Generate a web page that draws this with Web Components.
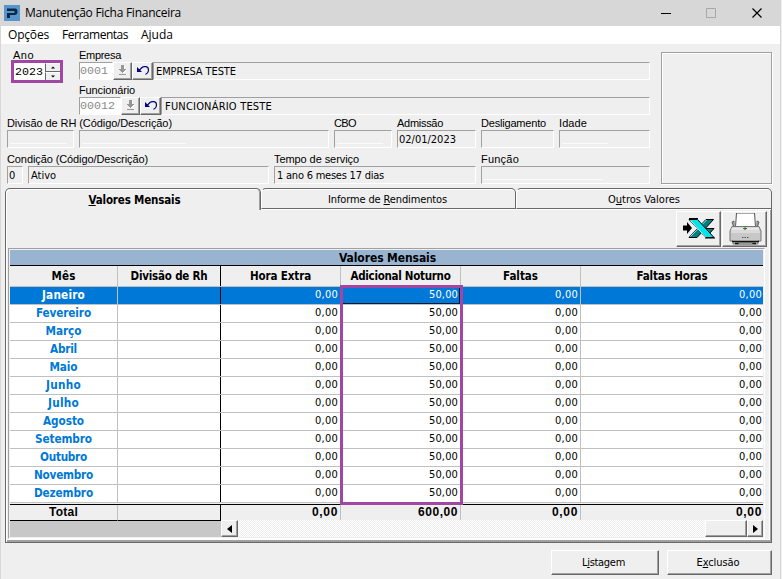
<!DOCTYPE html>
<html lang="pt-BR">
<head>
<meta charset="utf-8">
<title>Manutenção Ficha Financeira</title>
<style>
    body {
        margin: 0;
        width: 782px;
        height: 579px;
        overflow: hidden;
        background: #efefef;
        color: #000;
    }
</style>
</head>
<body>
<ficha-window></ficha-window>

<script>
// Text with a fixed advance width, so labels keep the same measure in any font
customElements.define('fit-text', class extends HTMLElement {
    constructor() {
        super()
        const shadow = this.attachShadow({ mode: "open" });
        shadow.innerHTML = /*html*/`<style>
        :host { display: block; flex: none; }
        span { display: inline-block; white-space: pre; vertical-align: top; }
        ::slotted(u) { text-decoration-thickness: 1px; text-underline-offset: 1px; }
        </style><span><slot></slot></span>`
    }

    connectedCallback() {
        const span = this.shadowRoot.querySelector('span')
        const width = Number(this.getAttribute('w'))
        if(!width) return;

        const natural = span.getBoundingClientRect().width
        const spacing = (width - natural) / this.textContent.length
        span.style.letterSpacing = spacing + 'px'
        this.style.width = width + 'px'
    }
})

customElements.define('title-bar', class extends HTMLElement {
    constructor() {
        super()
        const shadow = this.attachShadow({ mode: "open" });
        shadow.innerHTML = /*html*/`
        <style>
        :host {
            display: flex;
            align-items: center;
            height: 26px;
            box-sizing: border-box;
            padding: 0 17px 0 3px;
            background: #d7d7d7;
            font: 12px/16px "Open Sans", "Noto Sans", sans-serif;
        }
        .logo { margin-right: 5px; }
        .title { flex: 1; }
        .controls { display: flex; gap: 35px; }
        svg { display: block; }
        </style>
        <svg class="logo" width="16" height="16" viewBox="0 0 16 16">
            <rect width="16" height="16" fill="#5696cb"/>
            <path d="M3 3.500h8Q13.500 3.500 13.500 6.500T11 10H6v3H3V8h7.500V6H3z" fill="#0c2748"/>
        </svg>
        <div class="title"><slot></slot></div>
        <div class="controls">
            <svg width="10" height="12" viewBox="0 0 10 12"><path d="M0 6.500h10" stroke="#000"/></svg>
            <svg width="10" height="12" viewBox="0 0 10 12"><path d="M.5 1.500h9v9h-9z" fill="none" stroke="#a8a8a8"/></svg>
            <svg width="12" height="12" viewBox="0 0 12 12"><path d="M1.500 1.500l9 9M10.500 1.500l-9 9" stroke="#000" stroke-width="1.200"/></svg>
        </div>`
    }
})

customElements.define('menu-bar', class extends HTMLElement {
    constructor() {
        super()
        const shadow = this.attachShadow({ mode: "open" });
        shadow.innerHTML = /*html*/`
        <style>
        :host {
            display: flex;
            align-items: center;
            gap: 13px;
            height: 18px;
            padding-left: 7px;
            background: #fff;
            font: 12px/16px "Open Sans", "Noto Sans", sans-serif;
        }
        </style>
        <slot></slot>`
    }
})

// Raised button, holds an icon or a caption
customElements.define('win-button', class extends HTMLElement {
    constructor() {
        super()
        const shadow = this.attachShadow({ mode: "open" });
        shadow.innerHTML = /*html*/`
        <style>
        :host {
            display: flex;
            align-items: center;
            justify-content: center;
            box-sizing: border-box;
            flex: none;
            border: 1px solid;
            border-color: #fff #696969 #696969 #fff;
            box-shadow: inset -1px -1px #a0a0a0;
            background: #efefef;
        }
        </style>
        <slot></slot>`
    }
})

// Caption above a row of boxes
customElements.define('field-group', class extends HTMLElement {
    constructor() {
        super()
        const shadow = this.attachShadow({ mode: "open" });
        shadow.innerHTML = /*html*/`
        <style>
        :host { display: block; flex: none; min-width: 0; }
        .label {
            height: 14px;
            font: 11px/14px "Liberation Sans", Arial, sans-serif;
            white-space: nowrap;
        }
        .row { display: flex; height: 18px; }
        </style>
        <div class="label"><slot name="label"></slot></div>
        <div class="row"><slot></slot></div>`
    }
})

customElements.define('field-box', class extends HTMLElement {
    constructor() {
        super()
        const shadow = this.attachShadow({ mode: "open" });
        shadow.innerHTML = /*html*/`
        <style>
        :host {
            display: flex;
            flex-direction: column;
            box-sizing: border-box;
            flex: none;
            height: 18px;
            padding: 1px 0 0 2px;
            border: 1px solid;
            border-color: #a0a0a0 #fff #fff #a0a0a0;
            font: 11px/15.900px "DejaVu Sans Condensed", "DejaVu Sans", sans-serif;
        }
        :host([edit]) {
            padding: 0;
            background: #fff;
            color: #8a8a8a;
            font: 11.670px/16px "Liberation Mono", monospace;
        }
        i { display: block; height: 1px; margin-top: auto; margin-bottom: 3px; background: #fafafa; }
        </style>
        <slot></slot>`
        const trace = this.getAttribute('line')
        if(trace) shadow.innerHTML += `<i style="width:${trace}px"></i>`
    }
})

customElements.define('year-spin', class extends HTMLElement {
    constructor() {
        super()
        const shadow = this.attachShadow({ mode: "open" });
        shadow.innerHTML = /*html*/`
        <style>
        :host {
            display: flex;
            box-sizing: border-box;
            width: 52px;
            height: 23px;
            border: 3px solid #9f47a3;
            background: #fff;
            font: 11.670px/18px "Liberation Mono", monospace;
            padding-left: 1px;
        }
        .value { flex: 1; }
        .arrows { width: 15px; display: grid; grid-template-rows: 8px 8px; gap: 1px; background: #696969; }
        win-button { border-left-color: #696969; box-shadow: none; border-right: 0; border-bottom: 0; }
        svg { display: block; }
        </style>
        <div class="value"><slot></slot></div>
        <div class="arrows">
            <win-button><svg width="4" height="3"><path d="M0 2.500L2 .5l2 2z"/></svg></win-button>
            <win-button><svg width="4" height="3"><path d="M0 .5L2 2.500l2-2z"/></svg></win-button>
        </div>`
    }
})

customElements.define('lookup-buttons', class extends HTMLElement {
    constructor() {
        super()
        const shadow = this.attachShadow({ mode: "open" });
        shadow.innerHTML = /*html*/`
        <style>
        :host { display: flex; flex: none; }
        win-button { height: 18px; }
        svg { display: block; margin-top: -2px; }
        </style>
        <win-button style="width:19px">
            <svg width="9" height="10" viewBox="0 0 9 10" shape-rendering="crispEdges">
                <path d="M4 1h3v4h2L5.500 8.500 2 5h2zM2 9h7v1H2z" fill="#fff"/>
                <path d="M3 0h3v4h2v1H7v1H6v1H5v1H4V7H3V6H2V5H1V4h2zM1 9h7v1H1z" fill="#969696"/>
            </svg>
        </win-button>
        <win-button style="width:21px">
            <svg width="12" height="9" viewBox="0 0 12 9" fill="none" stroke="#000080" stroke-width="1.200">
                <path d="M0 1v5h5z" fill="#000080" stroke="none"/>
                <path d="M2 4.500L5 1.500Q6 .6 7.500 .6H9Q11.400 1 11.400 3.500V5Q11 7.500 8.500 8.400"/>
            </svg>
        </win-button>`
    }
})

customElements.define('employee-form', class extends HTMLElement {
    constructor() {
        super()
        const shadow = this.attachShadow({ mode: "open" });
        shadow.innerHTML = /*html*/`
        <style>
        :host { display: flex; height: 143px; padding: 4px 8px 0 6px; box-sizing: border-box; }
        .fields { width: 643px; display: grid; grid-template-rows: 35px 33px 36px 32px; }
        .line { display: flex; gap: 5px; }
        .ano { width: 67px; padding-left: 4px; box-sizing: border-box; }
        .ano .label { height: 12px; font: 11px/14px "Liberation Sans", Arial, sans-serif; padding-left: 2px; }
        .photo {
            width: 110px;
            height: 130px;
            margin: 4px 0 0 11px;
            border: 1px solid #a0a0a0;
            box-shadow: inset 1px 1px #fff, 1px 1px #fff;
        }
        </style>
        <div class="fields">
            <div class="line">
                <div class="ano">
                    <div class="label"><fit-text w="21">Ano</fit-text></div>
                    <year-spin><fit-text w="28">2023</fit-text></year-spin>
                </div>
                <field-group>
                    <fit-text slot="label" w="42">Empresa</fit-text>
                    <field-box edit style="width:34px"><fit-text w="28">0001</fit-text></field-box>
                    <lookup-buttons></lookup-buttons>
                    <field-box style="width:497px"><fit-text w="80">EMPRESA TESTE</fit-text></field-box>
                </field-group>
            </div>
            <div class="line">
                <field-group style="margin-left:72px">
                    <fit-text slot="label" w="56">Funcionário</fit-text>
                    <field-box edit style="width:42px"><fit-text w="35">00012</fit-text></field-box>
                    <lookup-buttons></lookup-buttons>
                    <field-box style="width:489px;padding-left:3px"><fit-text w="107">FUNCIONÁRIO TESTE</fit-text></field-box>
                </field-group>
            </div>
            <div class="line">
                <field-group style="width:67px">
                    <fit-text slot="label" w="165">Divisão de RH (Código/Descrição)</fit-text>
                    <field-box style="width:67px" line="57"></field-box>
                </field-group>
                <field-group><field-box style="width:250px" line="104"></field-box></field-group>
                <field-group>
                    <fit-text slot="label" w="22">CBO</fit-text>
                    <field-box style="width:58px" line="46"></field-box>
                </field-group>
                <field-group>
                    <fit-text slot="label" w="46">Admissão</fit-text>
                    <field-box style="width:79px;padding-left:1px"><fit-text w="57">02/01/2023</fit-text></field-box>
                </field-group>
                <field-group>
                    <fit-text slot="label" w="65">Desligamento</fit-text>
                    <field-box style="width:73px"></field-box>
                </field-group>
                <field-group>
                    <fit-text slot="label" w="28">Idade</fit-text>
                    <field-box style="width:91px" line="46"></field-box>
                </field-group>
            </div>
            <div class="line">
                <field-group style="width:16px">
                    <fit-text slot="label" w="141">Condição (Código/Descrição)</fit-text>
                    <field-box style="width:16px;padding-left:1px"><fit-text w="7">0</fit-text></field-box>
                </field-group>
                <field-group><field-box style="width:241px"><fit-text w="25">Ativo</fit-text></field-box></field-group>
                <field-group>
                    <fit-text slot="label" w="85">Tempo de serviço</fit-text>
                    <field-box style="width:202px"><fit-text w="107">1 ano 6 meses 17 dias</fit-text></field-box>
                </field-group>
                <field-group>
                    <fit-text slot="label" w="38">Função</fit-text>
                    <field-box style="width:169px" line="119"></field-box>
                </field-group>
            </div>
        </div>
        <div class="photo"></div>`
    }
})

customElements.define('tab-item', class extends HTMLElement {
    constructor() {
        super()
        const shadow = this.attachShadow({ mode: "open" });
        shadow.innerHTML = /*html*/`
        <style>
        :host {
            display: flex;
            justify-content: center;
            box-sizing: border-box;
            height: 21px;
            padding: 3px 2px 0 0;
            border: 1px solid #696969;
            border-left-color: #fff;
            border-radius: 5px 5px 0 0;
            box-shadow: inset 0 1px #fff;
            background: #efefef;
            font: 11px/15px "DejaVu Sans Condensed", "DejaVu Sans", sans-serif;
        }
        :host([active]) {
            border-bottom: 0;
            border-left-color: #696969;
            height: 22px;
            padding: 4px 0 0 3px;
            box-shadow: inset 1px 1px #fff, inset -1px 0 #a0a0a0;
            font-weight: bold;
            font-size: 11.500px;
        }
        </style>
        <slot></slot>`
    }
})

const excel_icon = /*html*/`
<svg width="34" height="24" viewBox="0 0 34 24">
    <path d="M1 8.500h4V5l5 6-5 6v-3.500H1z" fill="#000"/>
    <path d="M7 20.500L24 2.500h7.500L15 20.500z" fill="#008080" stroke="#000"/>
    <path d="M8.500 19.500L24.500 3" stroke="#9fe8e8"/>
    <path d="M24 11.500h8L27 17h-7z" fill="#008080" stroke="#000"/>
    <path d="M7 2.500h8.500l16.500 18h-8z" fill="#00e4ec" stroke="#000"/>
    <path d="M8.500 3.500l15 16.500" stroke="#c8ffff"/>
    <path d="M7 1.500h9M23 21h10" stroke="#000"/>
</svg>`

const printer_icon = /*html*/`
<svg width="34" height="33" viewBox="0 0 34 33">
    <path d="M6 8l-2 1 2 6h23l2-6-2-1v6H6z" fill="#d0d0d0" stroke="#444" stroke-width=".8"/>
    <path d="M8.500 0L7.500 14h20L26.500 0z" fill="#fff" stroke="#555"/>
    <path d="M4 13.500h27l2 4.500v10h-3v3H5v-3H2V18z" fill="#c8c8c8" stroke="#777"/>
    <path d="M4 14.500h27v3H3z" fill="#e8e8e8"/>
    <path d="M3 19h29" stroke="#eee"/>
    <path d="M4 28.500h27M7 30.500h21" stroke="#111" stroke-width="1.400"/>
    <path d="M11 30h13l1.500 2h-16z" fill="#999"/>
    <path d="M17 13v4M15 15.500h4" stroke="#00a030"/>
    <path d="M16.500 15h1.500v1.500h-1.500z" fill="#e22"/>
    <path d="M14 24.500h1.500m1 0H18m1 0h1.500" stroke="#555"/>
</svg>`

customElements.define('data-grid', class extends HTMLElement {
    constructor() {
        super()
        // month name and its caption width
        const months = [
            ['Janeiro', 43], ['Fevereiro', 55], ['Março', 36], ['Abril', 27],
            ['Maio', 28], ['Junho', 35], ['Julho', 31], ['Agosto', 41],
            ['Setembro', 57], ['Outubro', 47], ['Novembro', 59], ['Dezembro', 59]
        ]
        const values = [['0,00', 23], ['50,00', 29], ['0,00', 23], ['0,00', 23]]
        const heads = [['Mês', 24], ['Divisão de Rh', 77], ['Hora Extra', 61], ['Adicional Noturno', 100], ['Faltas', 35], ['Faltas Horas', 71]]
        const totals = [['0,00', 26], ['600,00', 40], ['0,00', 26], ['0,00', 26]]

        const cell = ([text, w]) => `<div><fit-text w="${w}">${text}</fit-text></div>`

        const shadow = this.attachShadow({ mode: "open" });
        shadow.innerHTML = /*html*/`
        <style>
        :host {
            display: block;
            position: relative;
            box-sizing: border-box;
            width: 757px;
            height: 291px;
            border: 1px solid;
            border-color: #a0a0a0 #fff #fff #a0a0a0;
            padding: 1px 0 0 1px;
            font: 11px/14px "DejaVu Sans Condensed", "DejaVu Sans", sans-serif;
        }
        .title {
            width: 753px;
            height: 15px;
            display: flex;
            justify-content: center;
            border-bottom: 1px solid #000;
            background: #99b4d1;
            font-size: 12px;
            font-weight: bold;
            line-height: 16px;
        }
        .title fit-text { margin-left: 2px; }
        .row {
            width: 753px;
            box-sizing: border-box;
            display: grid;
            grid-template-columns: 108px 103px 120px 120px 120px 182px;
            height: 18px;
            border-bottom: 1px solid #c0c0c0;
            background: #fff;
        }
        .row > div {
            display: flex;
            justify-content: flex-end;
            align-items: flex-start;
            padding: 1px 2px 0 0;
            border-right: 1px solid #c0c0c0;
        }
        .row > div:nth-child(1) { justify-content: center; padding-right: 0; color: #0078d7; font-weight: bold; font-size: 11.700px; }
        .row > div:nth-child(2) { border-right-color: #000; }
        .row > div:last-child { border-right: 0; padding-right: 1px; }
        .row.head { height: 21px; background: #efefef; }
        .row.head > div { justify-content: center; align-items: center; padding: 0; color: #000; font-weight: bold; font-size: 11.500px; }
        .row.selected { background: #0078d7; color: #fff; }
        .row.selected > div:first-child { color: #fff; }
        .row.selected > div:nth-child(4) { box-shadow: inset -1px -1px #001a33; }
        .row.total {
            height: 17px;
            margin-top: 1px;
            border-top: 1px solid #000;
            border-bottom: 0;
            background: #efefef;
            font: bold 12px/14px "Liberation Sans", Arial, sans-serif;
        }
        .row.total > div { padding-top: 0; }
        .row.total > div:nth-child(1) { color: #000; font-size: 12px; }
        .row.total > div:nth-child(-n+2) { border-bottom: 1px solid #000; }
        .foot { display: flex; width: 753px; height: 17px; margin-top: -1px; }
        .frozen { width: 211px; margin-top: 1px; background: #c8c8c8; }
        .track {
            flex: 1;
            display: flex;
            background: repeating-conic-gradient(#fff 0 25%, #efefef 0 50%) 0 0 / 2px 2px;
        }
        .track win-button { height: 17px; width: 17px; }
        .track .thumb { width: 42px; margin-left: auto; }
        .track svg { display: block; }
        /* highlight over the Adicional Noturno column */
        .mark {
            position: absolute;
            left: 331px;
            top: 36px;
            width: 117px;
            height: 214px;
            border: 3px solid #9f47a3;
        }
        </style>
        <div class="title"><fit-text w="97">Valores Mensais</fit-text></div>
        <div class="row head">${heads.map(cell).join('')}</div>
        ${months.map((m, i) => `<div class="row${i ? '' : ' selected'}">${cell(m)}<div></div>${values.map(cell).join('')}</div>`).join('')}
        <div class="row total">${cell(['Total', 29])}<div></div>${totals.map(cell).join('')}</div>
        <div class="foot">
            <div class="frozen"></div>
            <div class="track">
                <win-button><svg width="5" height="8"><path d="M5 0v8L0 4z"/></svg></win-button>
                <win-button class="thumb"></win-button>
                <win-button style="width:16px"><svg width="5" height="8"><path d="M0 0v8l5-4z"/></svg></win-button>
            </div>
        </div>
        <div class="mark"></div>`
    }
})

customElements.define('values-tabs', class extends HTMLElement {
    constructor() {
        super()
        const shadow = this.attachShadow({ mode: "open" });
        shadow.innerHTML = /*html*/`
        <style>
        :host { display: block; margin: 1px 9px 0 4px; }
        .tabs { display: grid; grid-template-columns: 256px 255px 256px; height: 21px; }
        .tabs tab-item[active] { z-index: 1; }
        .panel {
            box-sizing: border-box;
            width: 767px;
            height: 334px;
            padding: 2px 0 0 2px;
            border: 1px solid #696969;
            border-top: 0;
            box-shadow: inset 1px 1px #fff, inset -1px -2px #a0a0a0, inset -2px -3px #fff;
        }
        .tools { display: flex; justify-content: flex-end; gap: 1px; height: 37px; padding-right: 4px; }
        .tools win-button { width: 45px; height: 36px; }
        .tools svg { display: block; }
        </style>
        <div class="tabs">
            <tab-item active><fit-text w="92"><u>V</u>alores Mensais</fit-text></tab-item>
            <tab-item><fit-text w="119">Informe de <u>R</u>endimentos</fit-text></tab-item>
            <tab-item style="padding-right:0"><fit-text w="72">O<u>u</u>tros Valores</fit-text></tab-item>
        </div>
        <div class="panel">
            <div class="tools">
                <win-button>${excel_icon}</win-button>
                <win-button>${printer_icon}</win-button>
            </div>
            <data-grid></data-grid>
        </div>`
    }
})

customElements.define('ficha-window', class extends HTMLElement {
    constructor() {
        super()
        const shadow = this.attachShadow({ mode: "open" });
        shadow.innerHTML = /*html*/`
        <style>
        :host {
            display: block;
            box-sizing: border-box;
            width: 781px;
            height: 579px;
            border-left: 1px solid #d7d7d7;
            border-right: 1px solid #d7d7d7;
            background: #efefef;
        }
        .actions {
            display: flex;
            justify-content: flex-end;
            gap: 8px;
            padding: 7px 8px 0 0;
            font: 11px/14px "DejaVu Sans Condensed", "DejaVu Sans", sans-serif;
        }
        .actions win-button { height: 25px; padding: 1px 3px 0 0; }
        </style>
        <title-bar><fit-text w="156">Manutenção Ficha Financeira</fit-text></title-bar>
        <menu-bar>
            <fit-text w="41">Opções</fit-text>
            <fit-text w="66">Ferramentas</fit-text>
            <fit-text w="32">Ajuda</fit-text>
        </menu-bar>
        <employee-form></employee-form>
        <values-tabs></values-tabs>
        <div class="actions">
            <win-button style="width:108px"><fit-text w="43">L<u>i</u>stagem</fit-text></win-button>
            <win-button style="width:105px"><fit-text w="43">E<u>x</u>clusão</fit-text></win-button>
        </div>`
    }
})
</script>
</body>
</html>
